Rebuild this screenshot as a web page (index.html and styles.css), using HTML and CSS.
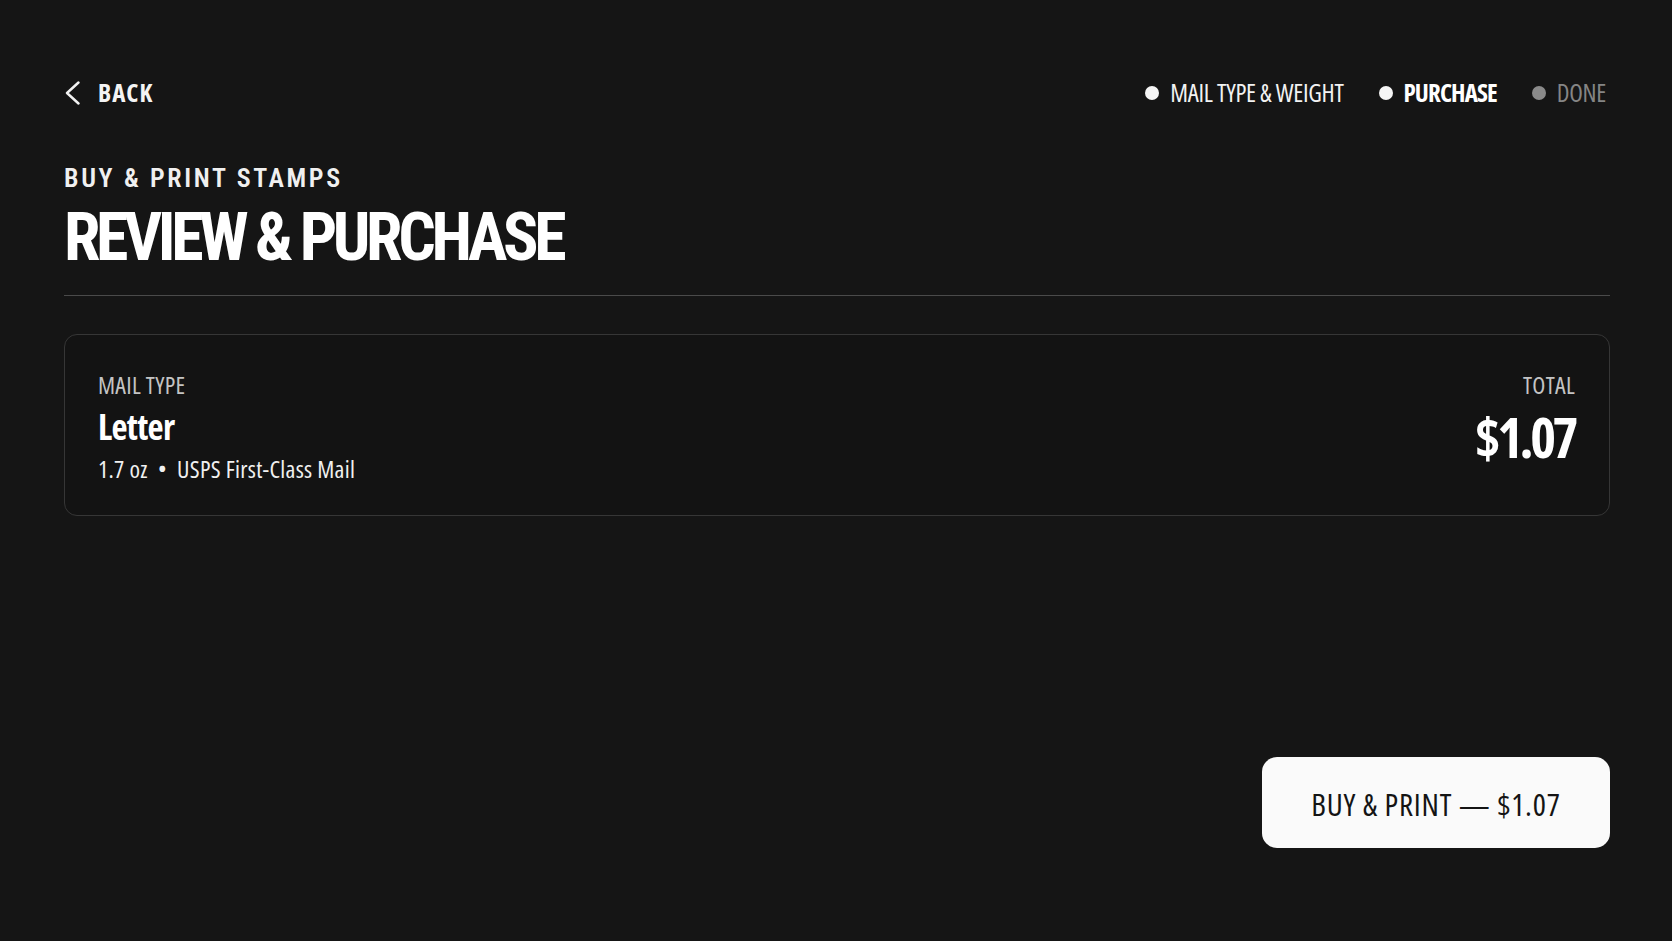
FILE: index.html
```html
<!DOCTYPE html>
<html lang="en">
<head>
<meta charset="utf-8">
<title>Review & Purchase</title>
<link rel="stylesheet" href="styles.css">
</head>
<body>
<div class="page">
  <header class="topbar">
    <a class="back" href="#">
      <svg class="back-icon" width="18" height="24" viewBox="0 0 18 24" aria-hidden="true">
        <path d="M14.5 1.5 L3 12 L14.5 22.5" fill="none" stroke="#f2f2f2" stroke-width="2.4" stroke-linecap="round" stroke-linejoin="round"/>
      </svg>
      <span>BACK</span>
    </a>
    <ol class="steps">
      <li class="step step-done"><span class="dot"></span>MAIL TYPE &amp; WEIGHT</li>
      <li class="step step-current"><span class="dot"></span>PURCHASE</li>
      <li class="step step-todo"><span class="dot"></span>DONE</li>
    </ol>
  </header>

  <p class="eyebrow">BUY &amp; PRINT STAMPS</p>
  <h1 class="title">REVIEW &amp; PURCHASE</h1>
  <hr class="divider">

  <section class="card">
    <div class="card-left">
      <div class="label">MAIL TYPE</div>
      <div class="mail-name">Letter</div>
      <div class="mail-meta">1.7 oz<span class="sep">•</span>USPS First-Class Mail</div>
    </div>
    <div class="card-right">
      <div class="label">TOTAL</div>
      <div class="amount">$1.07</div>
    </div>
  </section>

  <div class="actions">
    <button class="buy" type="button">BUY &amp; PRINT — $1.07</button>
  </div>
</div>
</body>
</html>
```

FILE: styles.css
```css
html, body {
  margin: 0;
  padding: 0;
  background: #151515;
  height: 100%;
}

body {
  font-family: "Open Sans", "Roboto", sans-serif;
  font-stretch: 75%;
  color: #f4f4f4;
}

.page {
  padding: 74px 62px 0 64px;
  display: flex;
  flex-direction: column;
}

.topbar {
  height: 36px;
  display: flex;
  align-items: center;
  justify-content: space-between;
}

.back {
  display: flex;
  align-items: center;
  gap: 16px;
  color: #f4f4f4;
  text-decoration: none;
  font-weight: 700;
  font-size: 25px;
  line-height: 28px;
  letter-spacing: 1px;
}

.back-icon {
  display: block;
  margin-top: 1px;
}

.steps {
  list-style: none;
  margin: 0 4px 0 0;
  padding: 0;
  display: flex;
  align-items: center;
  gap: 35px;
}

.step {
  display: flex;
  align-items: center;
  gap: 11px;
  font-size: 25px;
  line-height: 28px;
  letter-spacing: -0.3px;
  color: #f2f2f2;
}

.dot {
  width: 14px;
  height: 14px;
  border-radius: 50%;
  background: #f5f5f5;
  margin-top: 1px;
}

.step-current {
  font-weight: 700;
  letter-spacing: -0.9px;
  color: #ffffff;
}

.step-todo {
  color: #858585;
}

.step-todo .dot {
  background: #8a8a8a;
}

.eyebrow {
  margin: 53px 0 0;
  font-family: "Roboto", sans-serif;
  font-size: 26px;
  line-height: 30px;
  font-weight: 600;
  letter-spacing: 2.65px;
  color: #f0f0f0;
}

.title {
  margin: 9px 0 0;
  font-family: "Roboto", sans-serif;
  font-size: 66px;
  line-height: 72px;
  font-weight: 700;
  letter-spacing: -4.4px;
  color: #ffffff;
}

.divider {
  margin: 21px 0 0;
  border: 0;
  height: 1px;
  background: #4a4a4a;
}

.card {
  margin-top: 38px;
  border: 1px solid #363636;
  border-radius: 13px;
  background: #131313;
  padding: 37px 34px 32px 33px;
  display: flex;
  justify-content: space-between;
  align-items: flex-start;
}

.label {
  font-size: 24px;
  line-height: 26px;
  letter-spacing: 0.3px;
  color: #c4c4c4;
}

.mail-name {
  margin-top: 10px;
  font-size: 35px;
  line-height: 38px;
  font-weight: 700;
  letter-spacing: -0.7px;
  color: #ffffff;
}

.mail-meta {
  margin-top: 9px;
  font-size: 24px;
  line-height: 28px;
  font-weight: 500;
  letter-spacing: 0.3px;
  color: #f0f0f0;
}

.sep {
  margin: 0 10px;
}

.card-right {
  text-align: right;
}

.amount {
  margin-top: 11px;
  font-size: 55px;
  line-height: 56px;
  font-weight: 700;
  letter-spacing: -3.4px;
  color: #ffffff;
}

.actions {
  margin-top: 241px;
  display: flex;
  justify-content: flex-end;
}

.buy {
  width: 348px;
  height: 91px;
  padding: 2px 0 0;
  border: 0;
  border-radius: 15px;
  background: #fafafa;
  color: #141414;
  font-family: inherit;
  font-stretch: 75%;
  font-size: 31px;
  letter-spacing: 0.8px;
  cursor: pointer;
}
```
